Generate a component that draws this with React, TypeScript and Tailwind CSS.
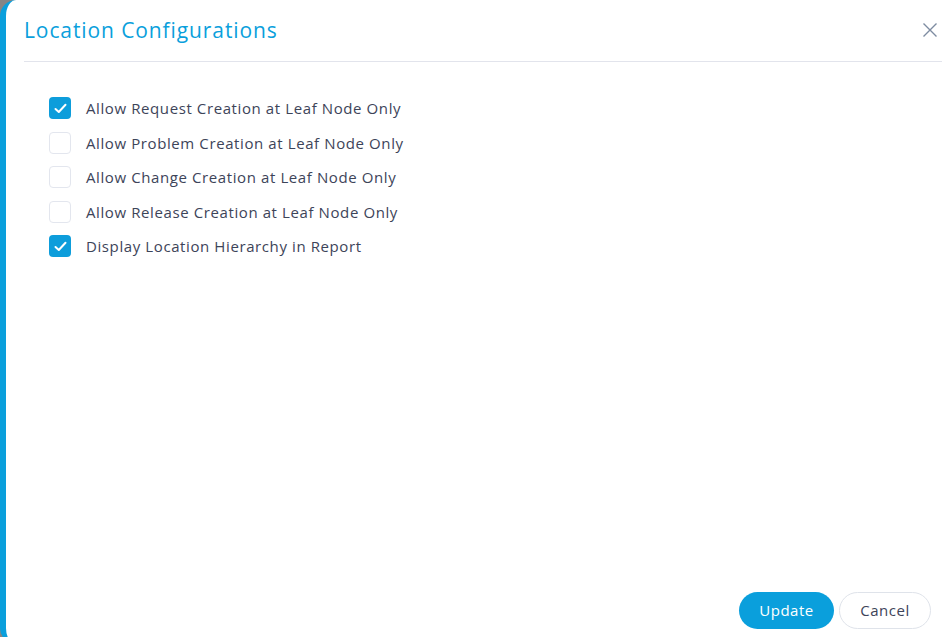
import { useState } from 'react';

const options = [
	{ label: 'Allow Request Creation at Leaf Node Only', checked: true },
	{ label: 'Allow Problem Creation at Leaf Node Only', checked: false },
	{ label: 'Allow Change Creation at Leaf Node Only', checked: false },
	{ label: 'Allow Release Creation at Leaf Node Only', checked: false },
	{ label: 'Display Location Hierarchy in Report', checked: true },
];

const CheckBox = ({ checked, onClick }: { checked: boolean; onClick: () => void }) => (
	<button
		onClick={onClick}
		className={
			checked
				? 'flex h-[22px] w-[22px] shrink-0 items-center justify-center rounded-[4px] bg-[#0d9ddb]'
				: 'flex h-[22px] w-[22px] shrink-0 items-center justify-center rounded-[4px] border border-[#e3e6ee] bg-white'
		}
	>
		{checked && (
			<svg width="13" height="11" viewBox="0 0 13 11" fill="none">
				<path
					d="M1.5 6L4.8 9L11.5 1.8"
					stroke="white"
					strokeWidth="2"
					strokeLinecap="round"
					strokeLinejoin="round"
				/>
			</svg>
		)}
	</button>
);

const App = (): JSX.Element => {
	const [values, setValues] = useState(options.map((o) => o.checked));

	const toggle = (i: number) => {
		setValues(values.map((v, idx) => (idx === i ? !v : v)));
	};

	return (
		<div className="h-[637px] w-full overflow-hidden bg-[#858585] font-['Open_Sans',sans-serif]">
			<div className="flex h-[644px] flex-col rounded-l-[16px] border-l-[6px] border-[#0a9fdc] bg-white">
				<div className="flex items-center justify-between pl-[18px] pr-[14px] pt-[16px] pb-[17px]">
					<h1 className="text-[21px] font-medium leading-[28px] tracking-[0.9px] text-[#0a9fdc]">
						Location Configurations
					</h1>
					<button className="text-[#7d8ca1]">
						<svg width="16" height="16" viewBox="0 0 16 16" fill="none">
							<path d="M1.5 1.5L14.5 14.5M14.5 1.5L1.5 14.5" stroke="currentColor" strokeWidth="1.4" />
						</svg>
					</button>
				</div>
				<div className="ml-[18px] mr-[10px] border-t border-[#e2e4ec]" />

				<div className="flex flex-1 flex-col gap-[12.5px] pl-[43px] pt-[35px]">
					{options.map((o, i) => (
						<label key={o.label} className="flex items-center gap-[15px]">
							<CheckBox checked={values[i]} onClick={() => toggle(i)} />
							<span className="text-[15px] leading-[22px] tracking-[0.6px] text-[#3d4459]">
								{o.label}
							</span>
						</label>
					))}
				</div>

				<div className="flex justify-end gap-[5px] pr-[21px] pb-[15px]">
					<button className="h-[37px] w-[95px] rounded-full bg-[#0a9fdc] text-[15px] tracking-[0.5px] text-white">
						Update
					</button>
					<button className="h-[37px] w-[92px] rounded-full border border-[#dfe3ea] bg-white text-[15px] tracking-[0.5px] text-[#3d4459]">
						Cancel
					</button>
				</div>
			</div>
		</div>
	);
};

export default App;
